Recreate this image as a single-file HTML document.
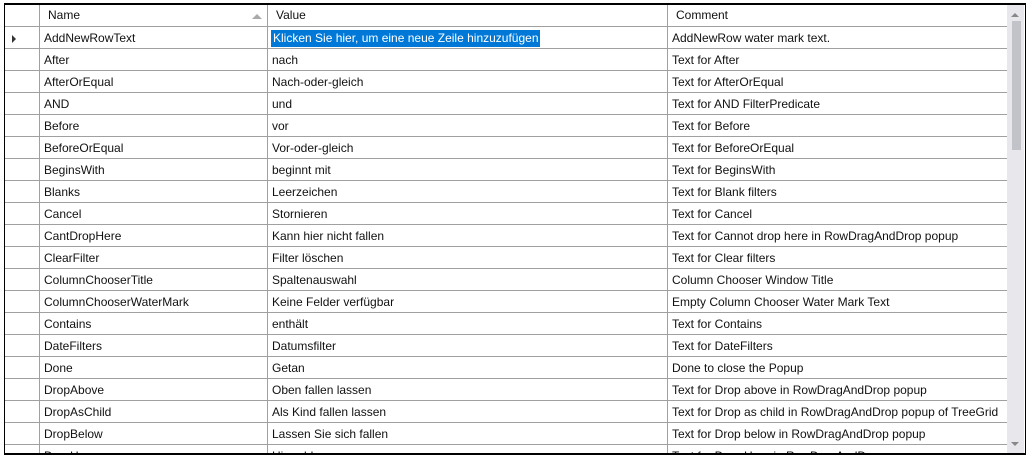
<!DOCTYPE html>
<html><head><meta charset="utf-8"><style>
*{margin:0;padding:0;box-sizing:border-box}
body{width:1030px;height:458px;background:#fff;position:relative;overflow:hidden;font-family:"Liberation Sans",sans-serif;font-size:12px;color:#111}
#g{position:absolute;left:4px;top:3px;width:1022px;height:452px;border:1px solid #000;border-width:2px 1px 2px 1px;overflow:hidden}
.r{position:absolute;left:0;width:1003px;height:22px;border-bottom:1px solid #a0a0a0}
.c{position:absolute;top:0;height:22px;line-height:21px;padding-top:1px;border-left:1px solid #a0a0a0;white-space:nowrap;overflow:hidden;padding-left:4px}
.a{left:34px;width:228px}.b{left:262px;width:400px}.d{left:662px;width:341px;border-right:1px solid #a0a0a0}
.h .c{padding-left:8px;padding-top:0}
#sb{position:absolute;left:1007px;top:5px;width:17px;height:448px;background:#e8e8ec}
#th{position:absolute;left:5px;top:16px;width:9px;height:129px;background:#c2c3c9}
</style></head><body>
<div id="g">
<div class="r h" style="top:0;height:22px"><div class="c a">Name<span style="position:absolute;left:212px;top:9px;width:0;height:0;border-left:5px solid transparent;border-right:5px solid transparent;border-bottom:5px solid #aaa"></span></div><div class="c b">Value</div><div class="c d">Comment</div></div>
<div id="rows"></div>
</div>
<div id="sb"><div id="th"></div>
<div style="position:absolute;left:4px;top:8px;border-left:4px solid transparent;border-right:4px solid transparent;border-bottom:4px solid #888"></div>
<div style="position:absolute;left:4px;top:437px;border-left:4px solid transparent;border-right:4px solid transparent;border-top:4px solid #888"></div>
</div>
<script>
var d=[["AddNewRowText","Klicken Sie hier, um eine neue Zeile hinzuzufügen","AddNewRow water mark text."],
["After","nach","Text for After"],["AfterOrEqual","Nach-oder-gleich","Text for AfterOrEqual"],["AND","und","Text for AND FilterPredicate"],["Before","vor","Text for Before"],["BeforeOrEqual","Vor-oder-gleich","Text for BeforeOrEqual"],["BeginsWith","beginnt mit","Text for BeginsWith"],["Blanks","Leerzeichen","Text for Blank filters"],["Cancel","Stornieren","Text for Cancel"],["CantDropHere","Kann hier nicht fallen","Text for Cannot drop here in RowDragAndDrop popup"],["ClearFilter","Filter löschen","Text for Clear filters"],["ColumnChooserTitle","Spaltenauswahl","Column Chooser Window Title"],["ColumnChooserWaterMark","Keine Felder verfügbar","Empty Column Chooser Water Mark Text"],["Contains","enthält","Text for Contains"],["DateFilters","Datumsfilter","Text for DateFilters"],["Done","Getan","Done to close the Popup"],["DropAbove","Oben fallen lassen","Text for Drop above in RowDragAndDrop popup"],["DropAsChild","Als Kind fallen lassen","Text for Drop as child in RowDragAndDrop popup of TreeGrid"],["DropBelow","Lassen Sie sich fallen","Text for Drop below in RowDragAndDrop popup"],["DropHere","Hier ablegen","Text for Drop Here in RowDragAndDrop popup"]];
var h="";d.forEach(function(r,i){var t=22+i*22;var v=r[1];if(i==0)v='<span style="background:#0078d7;color:#fff;padding:1px 1px 2px 2px;margin-left:-1px">'+v+'</span>';
h+='<div class="r" style="top:'+t+'px">'+(i==0?'<span style="position:absolute;left:7px;top:8px;border-top:4px solid transparent;border-bottom:4px solid transparent;border-left:4px solid #333"></span>':'')+'<div class="c a">'+r[0]+'</div><div class="c b">'+v+'</div><div class="c d">'+r[2]+'</div></div>';});
document.getElementById("rows").outerHTML=h;
</script>
</body></html>
